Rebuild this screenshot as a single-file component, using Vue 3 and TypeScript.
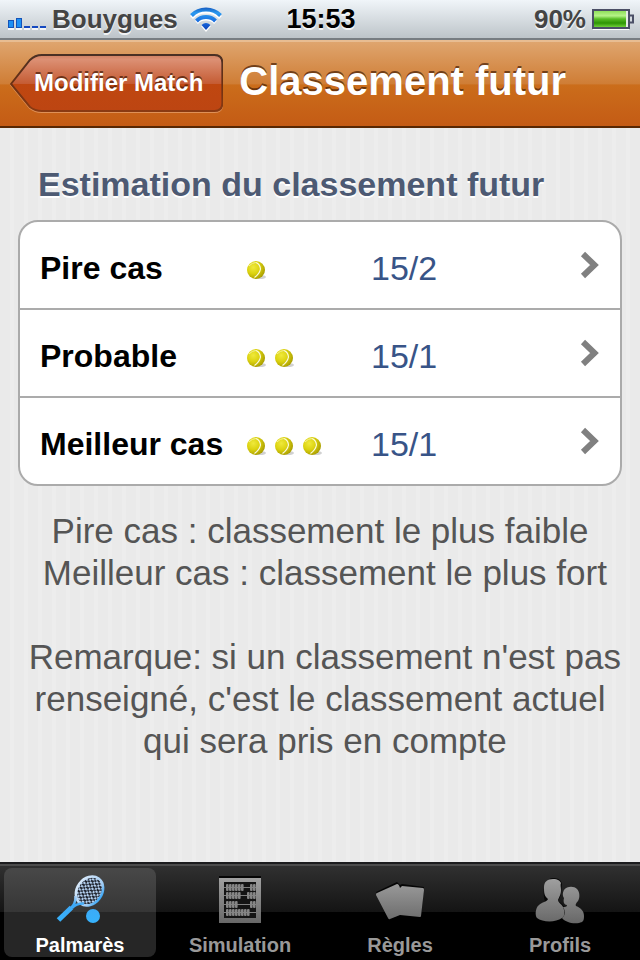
<script setup lang="ts">
import { ref } from 'vue'

interface Estimate {
  label: string
  balls: number
  rank: string
}

const estimates: Estimate[] = [
  { label: 'Pire cas', balls: 1, rank: '15/2' },
  { label: 'Probable', balls: 2, rank: '15/1' },
  { label: 'Meilleur cas', balls: 3, rank: '15/1' },
]

const tabs = [
  { id: 'palmares', label: 'Palmarès' },
  { id: 'simulation', label: 'Simulation' },
  { id: 'regles', label: 'Règles' },
  { id: 'profils', label: 'Profils' },
]

const activeTab = ref('palmares')

// Abacus beads: [top of the row, first bead, last bead] on a 3px pitch
const beadGroups: [number, number, number][] = [
  [13, 0, 5], [13, 8, 9],
  [21, 0, 4], [21, 7, 9],
  [30, 0, 3], [30, 8, 9],
  [38, 0, 7],
]
const beads = beadGroups.flatMap(([y, from, to]) =>
  Array.from({ length: to - from + 1 }, (_, i) => ({ x: 16 + (from + i) * 3, y })),
)
</script>

<template>
  <div class="screen">
    <header class="status">
      <div class="status-side">
        <svg class="signal" width="38" height="12" viewBox="0 0 38 12" aria-hidden="true">
          <rect x="0.5" y="2.500" width="5" height="7" fill="#1c90f4" stroke="#1553b8" />
          <rect x="8.5" y="0.500" width="5" height="9" fill="#1c90f4" stroke="#1553b8" />
          <path d="M16 9h6M24 9h6M32 9h6" stroke="#1549c0" stroke-width="2" />
          <path d="M0 11h6M8 11h6M16 11h6M24 11h6M32 11h6" stroke="#fff" stroke-opacity=".8" stroke-width="2" />
        </svg>
        <span class="carrier">Bouygues</span>
        <svg class="wifi" width="32" height="25" viewBox="0 0 32 25" aria-hidden="true">
          <defs>
            <linearGradient id="wifiFill" x1="0" y1="0" x2="0" y2="24" gradientUnits="userSpaceOnUse">
              <stop offset="0" stop-color="#1557bd" />
              <stop offset=".25" stop-color="#2b9af0" />
              <stop offset=".65" stop-color="#1767dc" />
              <stop offset="1" stop-color="#0b3fb5" />
            </linearGradient>
          </defs>
          <g fill="none" stroke="#fff" stroke-width="4" transform="translate(0 2)">
            <path d="M1.500 8.500a20.500 20.500 0 0 1 29 0" /><path d="M6.500 13.500a13.500 13.500 0 0 1 19 0" />
          </g>
          <path d="M16 25l-5-6q5-5 10 0z" fill="#fff" />
          <g fill="none" stroke="url(#wifiFill)" stroke-width="4">
            <path d="M1.500 8.500a20.500 20.500 0 0 1 29 0" /><path d="M6.500 14a13.500 13.500 0 0 1 19 0" />
          </g>
          <path d="M16 23l-4.500-5q4.500-4 9 0z" fill="url(#wifiFill)" />
        </svg>
      </div>
      <time class="clock">15:53</time>
      <div class="status-side status-end">
        <span class="carrier">90%</span>
        <svg class="battery" width="42" height="22" viewBox="0 0 42 22" aria-hidden="true">
          <defs>
            <linearGradient id="charge" x1="0" y1="0" x2="0" y2="1">
              <stop offset="0" stop-color="#8fe05a" />
              <stop offset=".3" stop-color="#b6f388" />
              <stop offset=".5" stop-color="#58bd25" />
              <stop offset=".75" stop-color="#2d9404" />
              <stop offset="1" stop-color="#6fd038" />
            </linearGradient>
          </defs>
          <path d="M1 21.500h36" stroke="#fff" />
          <rect x="1" y="2" width="36" height="18" fill="#e6ebe6" stroke="#4b4f66" stroke-width="2" />
          <rect x="2" y="3" width="32" height="16" fill="url(#charge)" />
          <path d="M38 7.500h3v7h-3" fill="#d5dbe0" stroke="#4b4f66" stroke-width="2" />
        </svg>
      </div>
    </header>

    <div class="navbar">
      <button type="button" class="back">
        <svg class="back-shape" viewBox="0 0 214 59" preserveAspectRatio="none" aria-hidden="true">
          <defs>
            <linearGradient id="backFill" x1="0" y1="0" x2="0" y2="1">
              <stop offset="0" stop-color="#cf8062" />
              <stop offset=".08" stop-color="#dc9074" />
              <stop offset=".51" stop-color="#c55c34" />
              <stop offset=".52" stop-color="#bf4710" />
              <stop offset="1" stop-color="#bd4512" />
            </linearGradient>
            <linearGradient id="backEdge" x1="0" y1="0" x2="0" y2="1">
              <stop offset="0" stop-color="#4a3024" />
              <stop offset=".5" stop-color="#6b3013" />
              <stop offset="1" stop-color="#8a3a12" />
            </linearGradient>
          </defs>
          <path d="M1 31L20 7Q25 2 32 2H205Q213 2 213 10V50Q213 58 205 58H32Q25 58 20 54Z" fill="none" stroke="#e9a573" stroke-opacity=".7" stroke-width="2" />
          <path d="M1 30L20 6Q25 1 32 1H205Q213 1 213 9V49Q213 57 205 57H32Q25 57 20 53Z" fill="url(#backFill)" stroke="url(#backEdge)" stroke-width="2" />
        </svg>
        <span class="back-label">Modifier Match</span>
      </button>
      <h1 class="title">Classement futur</h1>
    </div>

    <main class="content">
      <h2 class="heading">Estimation du classement futur</h2>
      <ul class="card">
        <li v-for="item in estimates" :key="item.label" class="item">
          <button type="button" class="row">
            <span class="row-label">{{ item.label }}</span>
            <span class="balls">
              <svg v-for="n in item.balls" :key="n" width="20" height="20" viewBox="0 0 20 20" aria-hidden="true">
                <defs>
                  <radialGradient :id="`ball-${item.balls}-${n}`" cx=".35" cy=".35" r=".7">
                    <stop offset="0" stop-color="#efe93c" />
                    <stop offset=".5" stop-color="#dcd310" />
                    <stop offset="1" stop-color="#a89c00" />
                  </radialGradient>
                </defs>
                <ellipse cx="14" cy="17" rx="6" ry="2" fill="#000" fill-opacity=".18" />
                <circle cx="10" cy="10" r="9" :fill="`url(#ball-${item.balls}-${n})`" />
                <path d="M10 2.500Q14 4 14.500 9Q13.500 14 8.500 17.500" fill="none" stroke="#fbfae0" stroke-width="1.200" />
                <path d="M3 6Q6 2.500 10 2.500" fill="none" stroke="#f4f19a" stroke-width="1" />
              </svg>
            </span>
            <span class="rank">{{ item.rank }}</span>
            <svg class="chevron" width="20" height="28" viewBox="0 0 20 28" aria-hidden="true">
              <path d="M3 3L14.500 14L3 25" fill="none" stroke="#808080" stroke-width="6" />
            </svg>
          </button>
        </li>
      </ul>
      <p class="note">
        Pire cas : classement le plus faible<br>
        &nbsp;Meilleur cas : classement le plus fort<br>
        <br>
        &nbsp;Remarque: si un classement n'est pas<br>
        renseigné, c'est le classement actuel<br>
        &nbsp;qui sera pris en compte
      </p>
    </main>

    <nav class="tabbar">
      <a
        v-for="tab in tabs"
        :key="tab.id"
        :href="`#${tab.id}`"
        class="tab"
        :class="{ active: tab.id === activeTab }"
        @click.prevent="activeTab = tab.id"
      >
        <svg v-if="tab.id === 'palmares'" class="icon" viewBox="0 0 60 56" aria-hidden="true">
          <defs>
            <linearGradient id="blue" x1="0" y1="5" x2="0" y2="52" gradientUnits="userSpaceOnUse">
              <stop offset="0" stop-color="#dcebfb" />
              <stop offset=".45" stop-color="#a3cdf5" />
              <stop offset=".6" stop-color="#3ea8f6" />
              <stop offset="1" stop-color="#36b2fc" />
            </linearGradient>
            <pattern id="strings" width="4" height="5" patternUnits="userSpaceOnUse">
              <rect width="4" height="5" fill="#b3cfee" />
              <rect x="0" y="0" width="2" height="3" fill="#20242e" />
              <rect x="2" y="2.500" width="2" height="2.500" fill="#2a303c" />
            </pattern>
          </defs>
          <ellipse cx="39.500" cy="20" rx="15.500" ry="12.500" transform="rotate(-54 39.500 20)" fill="url(#strings)" stroke="url(#blue)" stroke-width="2.600" />
          <path d="M25.500 25Q26 33 20 38M34 32.500Q27 32 22 37" fill="none" stroke="url(#blue)" stroke-width="2.500" />
          <path d="M21.500 36.500L8.500 49" stroke="url(#blue)" stroke-width="5" />
          <circle cx="43" cy="45" r="7" fill="url(#blue)" />
        </svg>

        <svg v-else-if="tab.id === 'simulation'" class="icon" viewBox="0 0 60 56" aria-hidden="true">
          <defs>
            <linearGradient id="gray" x1="0" y1="5" x2="0" y2="52" gradientUnits="userSpaceOnUse">
              <stop offset="0" stop-color="#a3a3a3" />
              <stop offset="1" stop-color="#686868" />
            </linearGradient>
          </defs>
          <path d="M9 6h42" stroke="#050505" stroke-width="2" />
          <path d="M14 11H46V47H14Z" fill="#141414" />
          <path d="M9 7H51V52H9ZM14 11V47H46V11Z" fill="url(#gray)" fill-rule="evenodd" />
          <path d="M14 16.500H46M14 24.500H46M14 33.500H46M14 41.500H46" stroke="#808080" stroke-width="1" />
          <rect v-for="bead in beads" :key="`${bead.x}-${bead.y}`" :x="bead.x" :y="bead.y" width="2.600" height="7" rx="1" fill="#858585" />
        </svg>

        <svg v-else-if="tab.id === 'regles'" class="icon" viewBox="0 0 60 56" aria-hidden="true">
          <path d="M6 21L27 11L30 14L32 13L54 16L51 45L30 44L20 48Z" fill="#050505" />
          <path d="M7 22L27 13Q29 13 30 17L32 15L53 17Q54 17 54 19L51 45Q51 46 50 46L30 44L20 48Q19 49 18 47L6 24Q6 22 7 22Z" fill="url(#gray)" />
        </svg>

        <svg v-else class="icon" viewBox="0 0 60 56" aria-hidden="true">
          <path d="M23 7C28 7 31 9 32 13L31 23C30 27 29 28 28 30C31 32 34 34 35 38L15 30C13 24 12 8 23 7Z" fill="#080808" />
          <path d="M23 8C28 8 30 10 31 12C30 14 31 16 31 19C31 24 29 26 28 29C28 32 33 33 34 39C35 43 34 46 32 47C25 52 12 51 7 47C5 45 5 37 9 34C12 31 17 31 18 28C14 25 14 21 14 16C14 11 17 8 23 8Z" fill="url(#gray)" />
          <path d="M34 19C37 15 44 15 47 18C50 21 50 27 48 30C46 32 45 34 46 35C51 37 54 40 54 45C54 50 53 51 49 52C42 53 35 51 32 47C36 44 35 39 33 36C35 36 37 36 37 34C34 34 33 31 34 27C32 24 33 21 34 19Z" fill="url(#gray)" />
        </svg>
        <span class="tab-label">{{ tab.label }}</span>
      </a>
    </nav>
  </div>
</template>

<style>
body {
  margin: 0;
  background: #ebebeb;
}
</style>

<style scoped>
.screen {
  display: flex;
  flex-direction: column;
  min-height: 100vh;
  font-family: "Liberation Sans", Helvetica, Arial, sans-serif;
  background: repeating-linear-gradient(90deg, #eaeaea 0 10px, #ededed 10px 14px);
}

.status {
  display: grid;
  grid-template-columns: 1fr auto 1fr;
  align-items: center;
  height: 38px;
  padding: 0 6px 0 8px;
  border-bottom: 2px solid #777d82;
  background: linear-gradient(#f0f5f9, #bdc4c9);
  text-shadow: 0 2px 0 rgba(255, 255, 255, 0.8);
}

.status-side {
  display: flex;
  align-items: center;
  gap: 6px;
}

.status-end {
  justify-content: flex-end;
}

.signal {
  margin-top: 10px;
}

.carrier {
  font-size: 26px;
  font-weight: bold;
  line-height: 38px;
  color: #444;
}

.wifi {
  margin-left: 6px;
}

.clock {
  font-size: 27px;
  font-weight: bold;
  line-height: 38px;
  color: #000;
}

.navbar {
  display: flex;
  align-items: center;
  gap: 16px;
  box-sizing: border-box;
  height: 88px;
  padding: 0 10px 2px;
  border-top: 2px solid #e8bd92;
  border-bottom: 2px solid #582703;
  background: linear-gradient(#dfa56e 0%, #cf7d35 50%, #cb6d1b 51%, #c45b15 100%);
}

.back {
  position: relative;
  flex: none;
  height: 59px;
  padding: 0 20px 0 24px;
  border: 0;
  background: none;
  font: bold 24px/58px "Liberation Sans", Helvetica, Arial, sans-serif;
  color: #fff;
  text-shadow: 0 -2px 0 rgba(70, 25, 5, 0.7);
  cursor: pointer;
}

.back-shape {
  position: absolute;
  inset: 0;
  width: 100%;
  height: 100%;
}

.back-label {
  position: relative;
}

.title {
  margin: 0;
  padding-bottom: 4px;
  font-size: 40px;
  line-height: 76px;
  color: #fff;
  text-shadow: 0 -2px 0 rgba(70, 30, 5, 0.7);
  white-space: nowrap;
}

.content {
  flex: 1;
  padding: 32px 18px 0;
}

.heading {
  margin: 0 20px 12px;
  font-size: 34px;
  line-height: 48px;
  color: #4d5a73;
  text-shadow: 0 2px 0 #fff;
}

.card {
  margin: 0;
  padding: 0;
  list-style: none;
  overflow: hidden;
  border: 2px solid #ababab;
  border-radius: 20px;
  background: #fff;
}

.item + .item {
  border-top: 2px solid #ababab;
}

.row {
  display: grid;
  grid-template-columns: 206px 125px 1fr auto;
  align-items: center;
  width: 100%;
  height: 86px;
  padding: 6px 20px 0;
  border: 0;
  background: none;
  font-family: inherit;
  text-align: left;
  cursor: pointer;
}

.row-label {
  font-size: 32px;
  font-weight: bold;
  line-height: 40px;
  color: #000;
}

.balls {
  display: flex;
  gap: 8px;
  padding-top: 4px;
}

.rank {
  font-size: 34px;
  line-height: 40px;
  color: #385487;
}

.chevron {
  margin-bottom: 6px;
}

.note {
  margin: 24px 0 0;
  font-size: 35px;
  line-height: 42px;
  color: #555;
  text-align: center;
  white-space: nowrap;
}

.tabbar {
  display: grid;
  grid-template-columns: repeat(4, 1fr);
  box-sizing: border-box;
  height: 98px;
  padding-top: 2px;
  border-top: 2px solid #1c1c1e;
  background: linear-gradient(#4c4c4c 0 2px, #303030 2px, #141414 48px, #000 48px);
}

.tab {
  display: flex;
  flex-direction: column;
  align-items: center;
  margin: 2px 4px 4px;
  border-radius: 8px;
  color: #999;
  text-decoration: none;
}

.active {
  background: linear-gradient(#484848, #363636 50%, #262626 50%);
  color: #fff;
}

.icon {
  width: 60px;
  height: 56px;
  margin-top: 3px;
}

.tab-label {
  margin-top: 6px;
  font-size: 20px;
  font-weight: bold;
  line-height: 24px;
}
</style>
